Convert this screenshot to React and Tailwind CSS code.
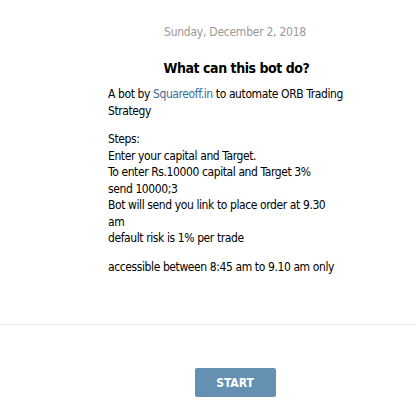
import React from "react";

const BotIntro = () => {
  return (
    <div className="flex flex-col items-center pl-[54px] pt-[24px]">
      <div className="text-[12px] leading-[16px] tracking-[-0.25px] text-[#999999]">
        Sunday, December 2, 2018
      </div>
      <div className="mt-[20px] pl-[3px] text-[14px] font-bold leading-[17px] tracking-[-0.45px] text-black">
        What can this bot do?
      </div>
      <div className="mt-[9px] w-[254px] text-[12px] leading-[16.5px] tracking-[-0.4px] text-black">
        <div className="whitespace-nowrap">
          A bot by{" "}
          <a href="#" className="text-[#3a6d99]">
            Squareoff.in
          </a>{" "}
          to automate ORB Trading
          <br />
          Strategy
        </div>
        <div className="mt-[12px] whitespace-nowrap">
          Steps:
          <br />
          Enter your capital and Target.
          <br />
          To enter Rs.10000 capital and Target 3%
          <br />
          send 10000;3
          <br />
          Bot will send you link to place order at 9.30
          <br />
          am
          <br />
          default risk is 1% per trade
        </div>
        <div className="mt-[12px] whitespace-nowrap">
          accessible between 8:45 am to 9.10 am only
        </div>
      </div>
    </div>
  );
};

export default function App() {
  return (
    <div
      className="flex h-[404px] w-[416px] flex-col bg-white"
      style={{ fontFamily: '"DejaVu Sans Condensed", "Liberation Sans", sans-serif' }}
    >
      <div className="h-[325px] border-b border-[#ebebeb]">
        <BotIntro />
      </div>
      <div className="flex flex-1 justify-center pl-[54px] pt-[43px]">
        <button className="h-[29px] w-[81px] rounded-[2px] bg-[#6490b2] text-[12px] font-bold text-white">
          START
        </button>
      </div>
    </div>
  );
}
